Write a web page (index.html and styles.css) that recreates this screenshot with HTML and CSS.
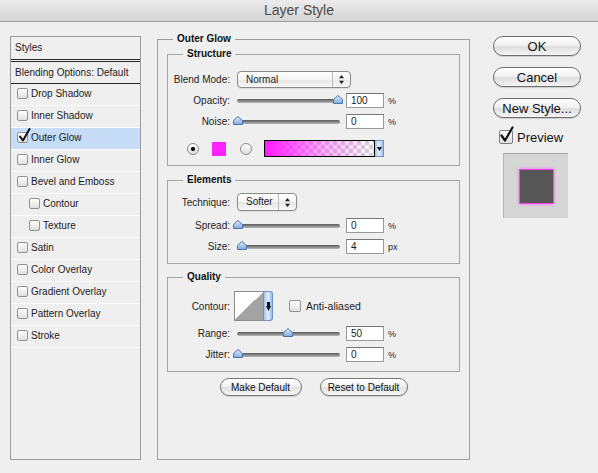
FILE: index.html
```html
<!DOCTYPE html>
<html lang="en">
<head>
    <meta charset="UTF-8">
    <meta name="viewport" content="width=device-width, initial-scale=1.0">
    <title>Layer Style</title>
    <link rel="stylesheet" href="styles.css">
</head>
<body>
    <div class="window">
        <div class="titlebar">Layer Style</div>

        <div class="content">
            <!-- style list on the left -->
            <div class="styles-list">
                <div class="list-head">Styles</div>
                <div class="list-blend">Blending Options: Default</div>
                <div class="list-item"><span class="cb"></span>Drop Shadow</div>
                <div class="list-item"><span class="cb"></span>Inner Shadow</div>
                <div class="list-item selected">
                    <span class="cb on">
                        <svg class="tick" width="13" height="15" viewBox="0 0 13 15"><path d="M2 8.5 L5 12.5 L11.5 1" fill="none" stroke="#111" stroke-width="2" stroke-linecap="round" stroke-linejoin="round"/></svg>
                    </span>Outer Glow
                </div>
                <div class="list-item"><span class="cb"></span>Inner Glow</div>
                <div class="list-item"><span class="cb"></span>Bevel and Emboss</div>
                <div class="list-item sub"><span class="cb"></span>Contour</div>
                <div class="list-item sub"><span class="cb"></span>Texture</div>
                <div class="list-item"><span class="cb"></span>Satin</div>
                <div class="list-item"><span class="cb"></span>Color Overlay</div>
                <div class="list-item"><span class="cb"></span>Gradient Overlay</div>
                <div class="list-item"><span class="cb"></span>Pattern Overlay</div>
                <div class="list-item"><span class="cb"></span>Stroke</div>
            </div>

            <!-- settings -->
            <fieldset class="panel">
                <legend>Outer Glow</legend>

                <fieldset class="group structure">
                    <legend>Structure</legend>
                    <div class="row h17">
                        <span class="lbl">Blend Mode:</span>
                        <div class="popup blend">
                            <span class="popup-text">Normal</span>
                            <span class="popup-arrows"><svg width="5" height="9" viewBox="0 0 5 9"><path d="M2.5 0 L5 3.2 H0 Z M0 5.8 H5 L2.5 9 Z" fill="#222"/></svg></span>
                        </div>
                    </div>
                    <div class="row h15 mt5">
                        <span class="lbl">Opacity:</span>
                        <div class="slider">
                            <div class="track"></div>
                            <svg class="thumb" style="left: 100px" width="10" height="9" viewBox="0 0 10 9"><path d="M0.5 8.5 V4.5 L5 0.5 L9.5 4.5 V8.5 Z" fill="url(#knob)" stroke="#4c74ab"/></svg>
                        </div>
                        <div class="num">100</div><span class="unit">%</span>
                    </div>
                    <div class="row h15 mt6">
                        <span class="lbl">Noise:</span>
                        <div class="slider">
                            <div class="track"></div>
                            <svg class="thumb" style="left: 0px" width="10" height="9" viewBox="0 0 10 9"><path d="M0.5 8.5 V4.5 L5 0.5 L9.5 4.5 V8.5 Z" fill="url(#knob)" stroke="#4c74ab"/></svg>
                        </div>
                        <div class="num">0</div><span class="unit">%</span>
                    </div>
                    <div class="row h17 mt11 colors">
                        <span class="radio on"></span>
                        <span class="swatch"></span>
                        <span class="radio second"></span>
                        <div class="grad-pick">
                            <div class="grad-swatch"></div>
                            <div class="pick-arrow"><svg width="5" height="4" viewBox="0 0 5 4"><path d="M0 0 H5 L2.5 4 Z" fill="#111"/></svg></div>
                        </div>
                    </div>
                </fieldset>

                <fieldset class="group elements">
                    <legend>Elements</legend>
                    <div class="row h18">
                        <span class="lbl">Technique:</span>
                        <div class="popup technique">
                            <span class="popup-text">Softer</span>
                            <span class="popup-arrows"><svg width="5" height="9" viewBox="0 0 5 9"><path d="M2.5 0 L5 3.2 H0 Z M0 5.8 H5 L2.5 9 Z" fill="#222"/></svg></span>
                        </div>
                    </div>
                    <div class="row h15 mt7">
                        <span class="lbl">Spread:</span>
                        <div class="slider">
                            <div class="track"></div>
                            <svg class="thumb" style="left: 0px" width="10" height="9" viewBox="0 0 10 9"><path d="M0.5 8.5 V4.5 L5 0.5 L9.5 4.5 V8.5 Z" fill="url(#knob)" stroke="#4c74ab"/></svg>
                        </div>
                        <div class="num">0</div><span class="unit">%</span>
                    </div>
                    <div class="row h15 mt6">
                        <span class="lbl">Size:</span>
                        <div class="slider">
                            <div class="track"></div>
                            <svg class="thumb" style="left: 4px" width="10" height="9" viewBox="0 0 10 9"><path d="M0.5 8.5 V4.5 L5 0.5 L9.5 4.5 V8.5 Z" fill="url(#knob)" stroke="#4c74ab"/></svg>
                        </div>
                        <div class="num">4</div><span class="unit">px</span>
                    </div>
                </fieldset>

                <fieldset class="group quality">
                    <legend>Quality</legend>
                    <div class="row h30">
                        <span class="lbl">Contour:</span>
                        <div class="contour">
                            <div class="contour-curve"></div>
                            <div class="pick-arrow"><svg width="5" height="9" viewBox="0 0 5 9"><path d="M1 0 H4 V4 H5 L2.5 9 L0 4 H1 Z" fill="#111"/></svg></div>
                        </div>
                        <span class="cb aa"></span>
                        <span class="aa-text">Anti-aliased</span>
                    </div>
                    <div class="row h15 mt5">
                        <span class="lbl">Range:</span>
                        <div class="slider">
                            <div class="track"></div>
                            <svg class="thumb" style="left: 50px" width="10" height="9" viewBox="0 0 10 9"><path d="M0.5 8.5 V4.5 L5 0.5 L9.5 4.5 V8.5 Z" fill="url(#knob)" stroke="#4c74ab"/></svg>
                        </div>
                        <div class="num">50</div><span class="unit">%</span>
                    </div>
                    <div class="row h15 mt6">
                        <span class="lbl">Jitter:</span>
                        <div class="slider">
                            <div class="track"></div>
                            <svg class="thumb" style="left: 0px" width="10" height="9" viewBox="0 0 10 9"><path d="M0.5 8.5 V4.5 L5 0.5 L9.5 4.5 V8.5 Z" fill="url(#knob)" stroke="#4c74ab"/></svg>
                        </div>
                        <div class="num">0</div><span class="unit">%</span>
                    </div>
                </fieldset>

                <div class="actions">
                    <button class="pill make">Make Default</button>
                    <button class="pill reset">Reset to Default</button>
                </div>
            </fieldset>

            <!-- dialog buttons -->
            <div class="side">
                <button class="btn">OK</button>
                <button class="btn">Cancel</button>
                <button class="btn">New Style...</button>
                <div class="preview-check">
                    <span class="cb big on">
                        <svg class="tick" width="15" height="17" viewBox="0 0 15 17"><path d="M2.5 9.5 L6 14.5 L13.5 1.5" fill="none" stroke="#111" stroke-width="2.2" stroke-linecap="round" stroke-linejoin="round"/></svg>
                    </span>
                    Preview
                </div>
                <div class="preview-thumb"><div class="preview-box"></div></div>
            </div>
        </div>
    </div>

    <svg class="defs" width="0" height="0">
        <defs>
            <linearGradient id="knob" x1="0" y1="0" x2="0" y2="1">
                <stop offset="0" stop-color="#e6f0fc"/>
                <stop offset="1" stop-color="#7ca7df"/>
            </linearGradient>
        </defs>
    </svg>
</body>
</html>
```

FILE: styles.css
```css
* {
    margin: 0;
    padding: 0;
    box-sizing: border-box;
}

body {
    background: #efefef;
    font-family: "Liberation Sans", Arial, sans-serif;
    font-size: 10px;
    color: #1c1c1c;
}

.window {
    width: 598px;
    height: 473px;
    overflow: hidden;
}

.titlebar {
    height: 22px;
    line-height: 21px;
    border-bottom: 1px solid #9e9e9e;
    background: linear-gradient(#ececec, #d4d4d4);
    text-align: center;
    font-size: 14px;
    color: #4a4a4a;
}

.content {
    display: flex;
    align-items: flex-start;
    padding-left: 10px;
}

/* left list */
.styles-list {
    width: 131px;
    height: 424px;
    margin-top: 14px;
    border: 1px solid #9c9c9c;
}

.list-head {
    height: 25px;
    line-height: 22px;
    padding-left: 4px;
    border-bottom: 3px double #2a2a2a;
}

.list-blend {
    height: 22px;
    line-height: 21px;
    padding-left: 4px;
    border-bottom: 1px solid #2a2a2a;
}

.list-item {
    display: flex;
    align-items: center;
    height: 22px;
    padding: 0 0 2px 6px;
    border-bottom: 1px solid #fbfbfb;
}

.list-item.sub {
    padding-left: 18px;
}

.list-item.selected {
    background: #c6dcf7;
}

.cb {
    position: relative;
    flex: none;
    width: 11px;
    height: 11px;
    margin-right: 3px;
    border: 1px solid #929292;
    border-radius: 2px;
    background: linear-gradient(#fdfdfd, #e0e0e0);
}

.cb .tick {
    position: absolute;
    left: 0;
    top: -5px;
}

.cb.big {
    width: 14px;
    height: 14px;
    margin-right: 4px;
    border-color: #7d7d7d;
}

.cb.big .tick {
    left: -1px;
    top: -5px;
}

/* main fieldsets */
.panel {
    width: 313px;
    margin: 11px 0 0 16px;
    padding: 3px 9px 63px;
    border: 1px solid #9d9d9d;
}

.panel > legend {
    margin-left: 6px;
    padding: 0 4px;
    font-weight: bold;
    line-height: 12px;
    color: #111;
}

.group {
    border: 1px solid #a6a6a6;
}

.group > legend {
    margin-left: 15px;
    padding: 0 4px;
    font-weight: bold;
    line-height: 12px;
    color: #111;
}

.structure {
    padding: 11px 0 8px;
}

.elements {
    margin-top: 8px;
    padding: 7px 0 9px;
}

.quality {
    margin-top: 7px;
    padding: 8px 0 9px;
}

.row {
    display: flex;
    align-items: center;
}

.h15 { height: 15px; }
.h17 { height: 17px; }
.h18 { height: 18px; }
.h30 { height: 30px; }
.mt5 { margin-top: 5px; }
.mt6 { margin-top: 6px; }
.mt7 { margin-top: 7px; }
.mt11 { margin-top: 11px; }

.lbl {
    width: 62px;
    text-align: right;
    color: #222;
}

/* popup menus */
.popup {
    display: flex;
    height: 100%;
    margin-left: 7px;
    border: 1px solid #8a8a8a;
    border-radius: 4px;
    background: linear-gradient(#ffffff, #f3f3f3 50%, #e6e6e6 52%, #f8f8f8);
    box-shadow: 0 1px 1px rgba(0, 0, 0, 0.08);
}

.popup.blend { width: 114px; }
.popup.technique { width: 60px; }

.popup-text {
    flex: 1;
    padding-left: 8px;
    line-height: 15px;
}

.popup.technique .popup-text {
    line-height: 16px;
}

.popup-arrows {
    display: flex;
    width: 18px;
    align-items: center;
    justify-content: center;
    border-left: 1px solid #b9b9b9;
}

/* sliders */
.slider {
    position: relative;
    width: 110px;
    height: 15px;
    margin-left: 3px;
}

.track {
    height: 4px;
    margin: 6px 3px 0 4px;
    border-radius: 2px;
    background: linear-gradient(#585858, #b8b8b8);
}

.thumb {
    position: absolute;
    top: 2px;
}

.num {
    width: 38px;
    height: 15px;
    margin-left: 3px;
    padding-left: 4px;
    line-height: 13px;
    border: 1px solid #9a9a9a;
    border-top-color: #777;
    background: #fff;
}

.unit {
    margin-left: 4px;
    font-size: 9px;
}

/* colour row */
.colors {
    padding-left: 19px;
}

.radio {
    flex: none;
    width: 12px;
    height: 12px;
    border: 1px solid #8c8c8c;
    border-radius: 50%;
    background: linear-gradient(#ffffff, #dcdcdc);
}

.radio.on {
    background: radial-gradient(circle, #111 0 1.8px, transparent 2.4px), linear-gradient(#ffffff, #dcdcdc);
}

.radio.second {
    margin-left: 14px;
}

.swatch {
    width: 14px;
    height: 14px;
    margin-left: 13px;
    background: #fd21fd;
}

.grad-pick {
    display: flex;
    height: 17px;
    margin-left: 12px;
}

.grad-swatch {
    width: 111px;
    border: 1px solid #000;
    background:
        linear-gradient(90deg, #ff1aff, rgba(255, 26, 255, 0.35) 55%, rgba(255, 26, 255, 0)),
        repeating-conic-gradient(#d2d2d2 0 25%, #ffffff 0 50%) 0 0 / 8px 8px;
}

.pick-arrow {
    display: flex;
    width: 9px;
    align-items: center;
    justify-content: center;
    border: 1px solid #6f94c6;
    border-left: none;
    background: linear-gradient(90deg, #9fc1ec, #e4effd 50%, #97bbe9);
}

/* contour */
.contour {
    display: flex;
    width: 39px;
    height: 30px;
    margin-left: 4px;
}

.contour-curve {
    width: 30px;
    border: 1px solid #8d8d8d;
    background: linear-gradient(to bottom right, #ffffff 50%, #a3a3a3 50%);
}

.contour .pick-arrow {
    border-color: #6f94c6;
    border-radius: 0 3px 3px 0;
}

.cb.aa {
    width: 12px;
    height: 12px;
    margin-left: 16px;
}

.aa-text {
    margin-left: 2px;
    font-size: 10.5px;
}

/* small buttons */
.actions {
    display: flex;
    justify-content: center;
    gap: 18px;
    margin-top: 6px;
}

.pill {
    height: 18px;
    border: 1px solid #777;
    border-radius: 9px;
    background: linear-gradient(#ffffff, #f2f2f2 45%, #e1e1e1 55%, #f6f6f6);
    font-family: inherit;
    font-size: 10px;
    color: #111;
    box-shadow: 0 1px 1px rgba(0, 0, 0, 0.15);
}

.pill.make { width: 82px; }
.pill.reset { width: 88px; }

/* right column */
.side {
    width: 88px;
    margin: 14px 0 0 23px;
}

.btn {
    display: block;
    width: 88px;
    height: 20px;
    margin-bottom: 11px;
    border: 1px solid #6e6e6e;
    border-radius: 10px;
    background: linear-gradient(#ffffff, #f1f1f1 45%, #dedede 55%, #f5f5f5);
    box-shadow: 0 1px 1px rgba(0, 0, 0, 0.15);
    font-family: inherit;
    font-size: 13px;
    color: #111;
}

.preview-check {
    display: flex;
    align-items: center;
    height: 16px;
    margin-left: 6px;
    font-size: 13px;
    color: #111;
}

.preview-thumb {
    display: flex;
    align-items: center;
    justify-content: center;
    width: 65px;
    height: 65px;
    margin: 8px 0 0 10px;
    border-top: 1px solid #a5a5a5;
    border-left: 1px solid #b5b5b5;
    background: #d6d6d6;
}

.preview-box {
    width: 33px;
    height: 33px;
    background: #565656;
    box-shadow: 0 0 0 1px #ff3cff, 0 0 3px 1px rgba(255, 60, 255, 0.7);
}

.defs {
    display: block;
    height: 0;
}
```
